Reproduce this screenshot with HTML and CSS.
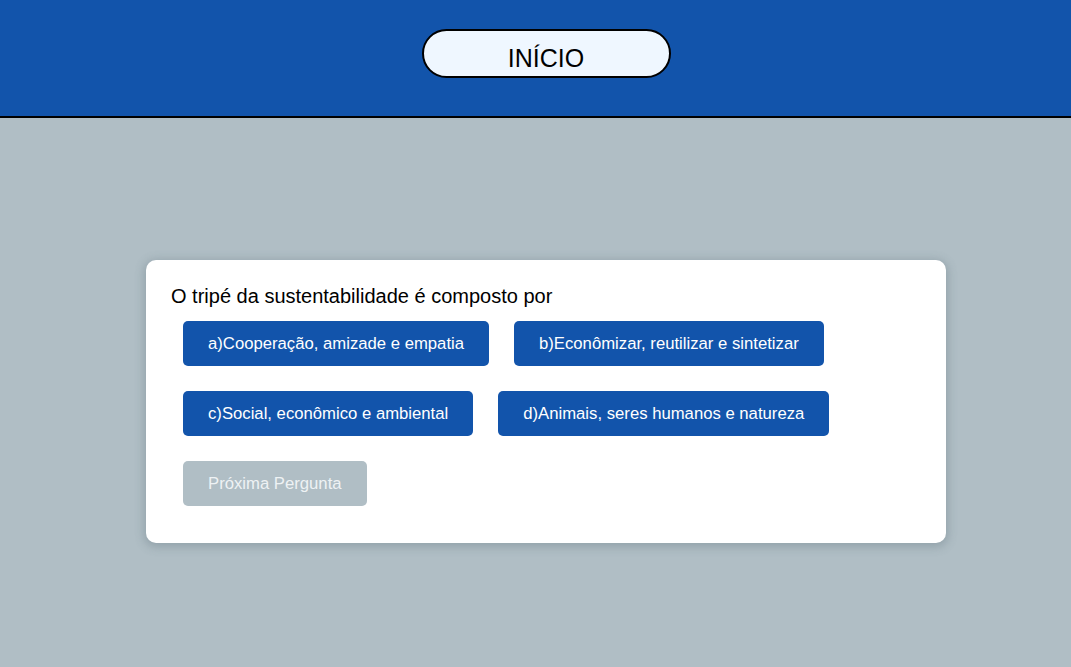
FILE: index.html
```html
<!DOCTYPE html>
<html lang="pt-BR">
<head>
<meta charset="utf-8">
<title>Quiz</title>
<link rel="stylesheet" href="styles.css">
</head>
<body>
<header class="topbar">
  <button class="home-btn">INÍCIO</button>
</header>
<main class="stage">
  <section class="card">
    <p class="question">O tripé da sustentabilidade é composto por</p>
    <div class="answers">
      <div class="row">
        <button class="btn">a)Cooperação, amizade e empatia</button>
        <button class="btn">b)Econômizar, reutilizar e sintetizar</button>
      </div>
      <div class="row">
        <button class="btn">c)Social, econômico e ambiental</button>
        <button class="btn">d)Animais, seres humanos e natureza</button>
      </div>
      <div class="row">
        <button class="btn btn-disabled">Próxima Pergunta</button>
      </div>
    </div>
  </section>
</main>
</body>
</html>
```
FILE: styles.css
```css
* { box-sizing: border-box; }
html, body { margin: 0; padding: 0; }
body {
  font-family: "Liberation Sans", Arial, sans-serif;
  background: #b0bec5;
  min-height: 667px;
}
.topbar {
  height: 118px;
  background: #1254ab;
  border-bottom: 2px solid #000;
  display: flex;
  justify-content: center;
  padding: 29px 0 0 21px;
}
.home-btn {
  width: 249px;
  height: 49px;
  background: #eff7ff;
  border: 2px solid #000;
  border-radius: 25px;
  font-family: "Liberation Sans", Arial, sans-serif;
  font-size: 25px;
  color: #000;
  padding: 9px 0 0 0;
}
.stage {
  display: flex;
  justify-content: center;
  padding: 142px 0 0 21px;
}
.card {
  width: 800px;
  height: 283px;
  background: #fff;
  border-radius: 10px;
  box-shadow: 0 2px 10px 2px rgba(80, 100, 110, 0.3);
  padding: 24px 25px;
}
.question {
  margin: 0 0 13px 0;
  font-size: 20px;
  line-height: 24px;
  color: #000;
}
.answers {
  display: flex;
  flex-direction: column;
  gap: 25px;
  padding-left: 12px;
}
.row {
  display: flex;
  gap: 25px;
}
.btn {
  height: 45px;
  padding: 0 25px;
  background: #1254ab;
  color: #fff;
  border: none;
  border-radius: 5px;
  font-family: "Liberation Sans", Arial, sans-serif;
  font-size: 16.7px;
}
.btn-disabled {
  background: #b0bec5;
  color: #eef2f4;
}
```
